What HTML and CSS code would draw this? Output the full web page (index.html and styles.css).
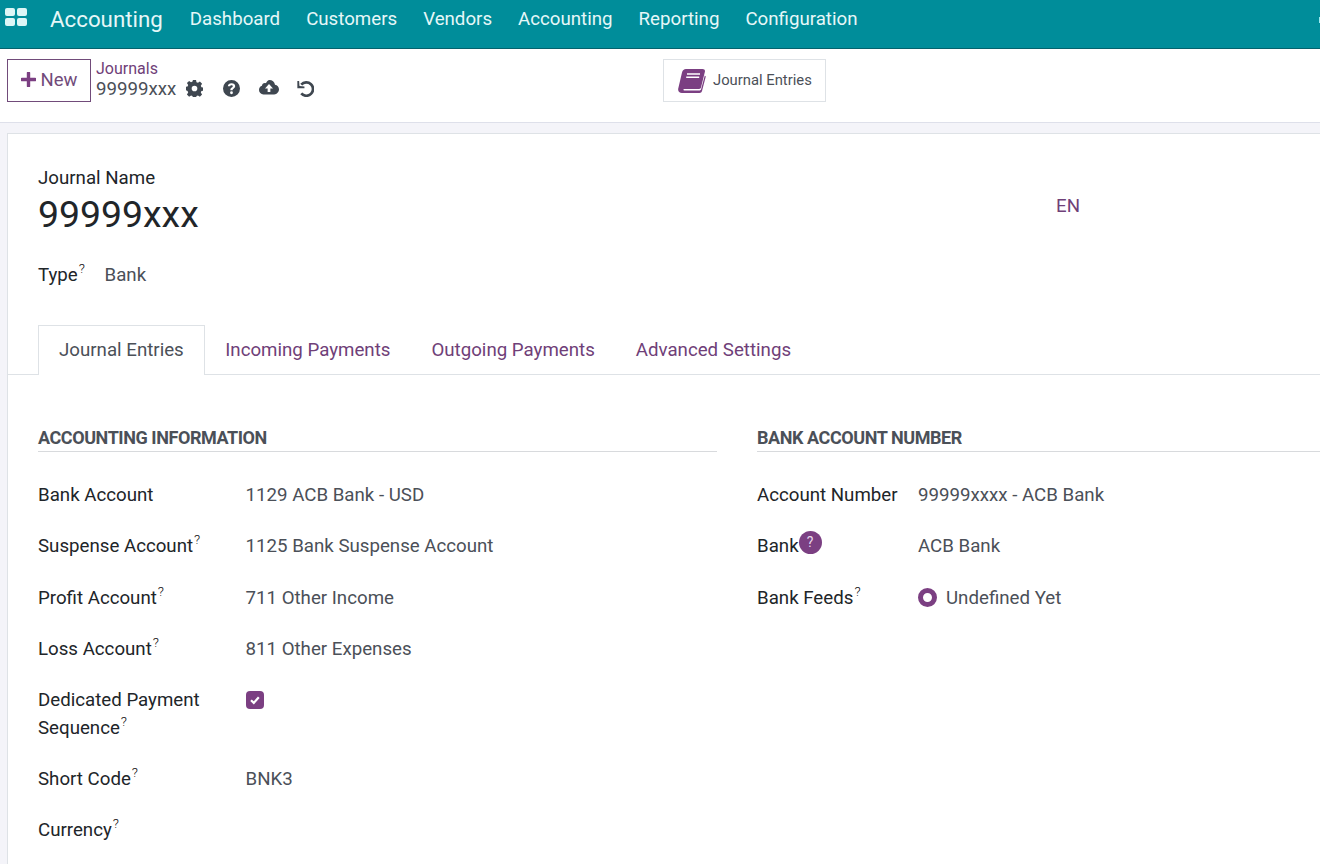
FILE: index.html
```html
<!DOCTYPE html>
<html lang="en">
<head>
<meta charset="utf-8">
<title>Journals</title>
<link rel="stylesheet" href="styles.css">
</head>
<body>
<header class="navbar">
  <svg class="apps" width="22" height="18" viewBox="0 0 22 18"><rect x="0" y="0" width="10" height="8" rx="2"/><rect x="12" y="0" width="10" height="8" rx="2"/><rect x="0" y="10" width="10" height="8" rx="2"/><rect x="12" y="10" width="10" height="8" rx="2"/></svg>
  <span class="brand">Accounting</span>
  <nav class="menu"><span>Dashboard</span><span>Customers</span><span>Vendors</span><span>Accounting</span><span>Reporting</span><span>Configuration</span></nav>
  <i class="edge"></i>
</header>
<section class="control">
  <button class="new"><svg width="15" height="15" viewBox="0 0 15 15"><path d="M7.500 1v13M1 7.500h13" stroke="#7b3f82" stroke-width="3.400" stroke-linecap="round"/></svg>New</button>
  <div class="crumbs">
    <a>Journals</a>
    <div class="current"><span>99999xxx</span>
      <svg class="tool gear" width="17" height="17" viewBox="0 0 24 24"><path fill-rule="evenodd" d="M9.800 0h4.400l.6 3.100 2.100.9 2.700-1.800 3.100 3.100-1.800 2.700.9 2.100 3.100.6v4.400l-3.100.6-.9 2.100 1.800 2.700-3.100 3.100-2.700-1.800-2.100.9-.6 3.100H9.800l-.6-3.100-2.100-.9-2.700 1.800-3.100-3.100 1.800-2.700-.9-2.100L-.9 14.200V9.800L2.200 9.200l.9-2.100L1.300 4.400l3.100-3.100 2.700 1.800 2.100-.9zM12 8a4 4 0 1 0 0 8 4 4 0 0 0 0-8z"/></svg>
      <svg class="tool help" width="17" height="17" viewBox="0 0 24 24"><path fill-rule="evenodd" d="M12 0a12 12 0 1 1 0 24 12 12 0 0 1 0-24zm0 4.500c-3 0-5 1.800-5.200 4.400h3.300c.1-1 .8-1.500 1.900-1.500s1.800.6 1.800 1.400c0 .8-.4 1.200-1.400 1.800-1.300.9-2 1.700-2 3.400v.5h3.200v-.3c0-.9.300-1.300 1.400-2 1.400-.9 2.200-2 2.200-3.600 0-2.400-2-4.100-5-4.100zM12 16a2 2 0 1 0 0 4 2 2 0 0 0 0-4z"/></svg>
      <svg class="tool cloud" width="20" height="16" viewBox="0 0 25 20"><path fill-rule="evenodd" d="M13 0c3.600 0 6.400 2.500 7 5.800 2.900.5 5 2.900 5 5.900 0 3.400-2.700 6.300-6 6.300H5.500C2.500 18 0 15.500 0 12.500c0-2.400 1.500-4.500 3.700-5.200 0-2.500 2.700-4.200 5-3.200C9.700 1.700 11.200 0 13 0zm-.500 5L7.500 10.500h3.300V15h3.400v-4.500h3.300z"/></svg>
      <svg class="tool undo" width="17" height="17" viewBox="0 0 24 24"><path d="M6 6.500A9.500 9.500 0 1 1 6 19" fill="none" stroke="#3f4750" stroke-width="3.800"/><path d="M0.500 1.500h2.500L3.500 8.500 10.500 9V11.500H0.500z"/></svg>
    </div>
  </div>
  <button class="stat">
    <svg width="28" height="24" viewBox="0 0 28 24"><path d="M8 0h16.500c1.800 0 2.800 1.200 2.400 2.800L23 18.500c-.3 1-.9 1.400-1.800 1.400H6.800c-1.700 0-2 1.500-.4 1.500h15.300c.8 0 1.200-.5 1.400-1.200L26.800 6.500l1 1L24 22c-.3 1.200-1.200 2-2.500 2H4c-2.800 0-4.400-2.200-3.700-4.800L4 3.500C4.500 1.300 6 0 8 0z" fill="#7b3f82"/><path d="M9 5h13M8.200 8.300h13" stroke="#fff" stroke-width="1.500"/></svg>
    <span>Journal Entries</span>
  </button>
</section>
<main class="sheet">
  <div class="title-row">
    <div>
      <label class="name-label">Journal Name</label>
      <h1>99999xxx</h1>
    </div>
    <a class="lang">EN</a>
  </div>
  <div class="type-row"><label>Type<sup>?</sup></label><span>Bank</span></div>
  <div class="tabs"><a class="active">Journal Entries</a><a>Incoming Payments</a><a>Outgoing Payments</a><a>Advanced Settings</a></div>
  <div class="groups">
    <section class="left">
      <h2>ACCOUNTING INFORMATION</h2>
      <div class="rows">
        <div class="row"><label>Bank Account</label><span>1129 ACB Bank - USD</span></div>
        <div class="row"><label>Suspense Account<sup>?</sup></label><span>1125 Bank Suspense Account</span></div>
        <div class="row"><label>Profit Account<sup>?</sup></label><span>711 Other Income</span></div>
        <div class="row"><label>Loss Account<sup>?</sup></label><span>811 Other Expenses</span></div>
        <div class="row tall"><label>Dedicated Payment Sequence<sup>?</sup></label><span class="check"><svg width="12" height="12" viewBox="0 0 12 12"><path d="M2 6.300l2.800 2.600 5-5.600" fill="none" stroke="#fff" stroke-width="2.200"/></svg></span></div>
        <div class="row"><label>Short Code<sup>?</sup></label><span>BNK3</span></div>
        <div class="row"><label>Currency<sup>?</sup></label><span></span></div>
      </div>
    </section>
    <section class="right">
      <h2>BANK ACCOUNT NUMBER</h2>
      <div class="rows">
        <div class="row"><label>Account Number</label><span>99999xxxx - ACB Bank</span></div>
        <div class="row"><label>Bank<i class="badge">?</i></label><span>ACB Bank</span></div>
        <div class="row"><label>Bank Feeds<sup>?</sup></label><span class="radio-wrap"><i class="radio"></i>Undefined Yet</span></div>
      </div>
    </section>
  </div>
</main>
</body>
</html>
```
FILE: styles.css
```css
* { box-sizing: border-box; }
html, body { margin: 0; height: 864px; overflow: hidden; }
body { background: #f4f4f9; color: #4b5058; font-family: Roboto, sans-serif; font-size: 18.700px; width: 1320px; }
.navbar { height: 49px; background: #008d9a; border-bottom: 1px solid #04626d; display: flex; align-items: flex-start; padding: 8px 0 0 5px; }
.apps { fill: #dcf6f6; flex: none; }
.brand { font-size: 22.300px; margin-left: 23px; line-height: 24px; margin-top: -1px; color: #e6f7f8; }
.menu { display: flex; gap: 26px; margin-left: 27px; line-height: 22px; color: #e6f7f8; }
.edge { margin: 9px 0 0 auto; width: 1px; height: 6px; background: #9fe9f0; }
.control { height: 74px; background: #fff; border-bottom: 1px solid #dee0ea; display: flex; align-items: flex-start; padding: 10px 0 0 7px; position: relative; }
.new { width: 84px; height: 43px; background: #fff; border: 1px solid #714b7a; color: #714b7a; font: 18.500px Roboto, sans-serif; padding: 0 0 2px; display: flex; align-items: center; justify-content: center; gap: 5px; }
.crumbs { margin-left: 5px; }
.crumbs a { display: block; color: #6f4078; font-size: 16px; line-height: 19px; }
.current { display: flex; align-items: center; line-height: 22px; color: #4b5058; }
.tool { fill: #3f4750; flex: none; margin-top: -2px; }
.gear { margin-left: 10px; }
.help { margin-left: 20px; }
.cloud { margin-left: 19px; }
.undo { margin-left: 18px; }
.stat { position: absolute; left: 663px; top: 10px; width: 163px; height: 43px; background: #fff; border: 1px solid #dee2e6; display: flex; align-items: center; padding: 0 0 2px 14px; gap: 7px; color: #4b5058; font: 14.800px Roboto, sans-serif; }
.stat svg { margin-top: 2px; }
.sheet { margin: 10px 0 0 7px; height: 731px; background: #fff; border-left: 1px solid #dee2e6; border-top: 1px solid #dee2e6; padding-top: 33px; }
.title-row { display: flex; justify-content: space-between; padding-left: 30px; }
.name-label { display: block; color: #212529; line-height: 22px; }
h1 { font-weight: 400; font-size: 37.400px; line-height: 48px; margin: 1px 0 0; color: #212529; }
.lang { color: #6f4078; margin: 28px 240px 0 0; line-height: 22px; }
.type-row { display: flex; padding-left: 30px; margin-top: 24px; line-height: 26px; }
.type-row label { width: 66.500px; color: #212529; }
sup { font-size: 13.500px; font-weight: 300; line-height: 0; vertical-align: 8px; margin-left: 1px; color: #111; }
.tabs { display: flex; margin-top: 37px; height: 50px; border-bottom: 1px solid #dee2e6; padding-left: 30px; }
.tabs a { color: #6f4078; padding: 0 20.500px; line-height: 50px; }
.tabs .active { color: #4b5058; border: 1px solid #dee2e6; border-bottom: 0; background: #fff; height: 50px; padding: 0 20px; line-height: 48px; }
.groups { display: flex; padding: 50px 0 0 30px; }
.left { width: 679px; flex: none; }
.right { flex: 1; margin-left: 40px; }
h2 { margin: 0; font-size: 18px; font-weight: 700; line-height: 25px; height: 27px; border-bottom: 1px solid #d8dadd; color: #4b5058; letter-spacing: -0.430px; }
.rows { padding-top: 29px; }
.row { display: flex; min-height: 51.300px; line-height: 28px; }
.row.tall { min-height: 79px; }
.row label { width: 207.500px; flex: none; color: #212529; }
.row.tall label { width: 180px; margin-right: 27.500px; }
.right .row label { width: 161px; }
.check { width: 18px; height: 18px; border-radius: 4px; background: #7b3f82; margin: 5px 0 0 .5px; display: flex; align-items: center; justify-content: center; }
.badge { display: inline-block; position: relative; top: -5px; width: 23px; height: 23px; border-radius: 50%; background: #7b3f82; color: #e8d8ea; font: 14px/23px Roboto, sans-serif; text-align: center; }
.radio-wrap { display: flex; align-items: center; height: 28px; }
.radio { width: 19px; height: 19px; border-radius: 50%; border: 5.500px solid #7b3f82; margin-right: 9px; background: #fff; }
```
